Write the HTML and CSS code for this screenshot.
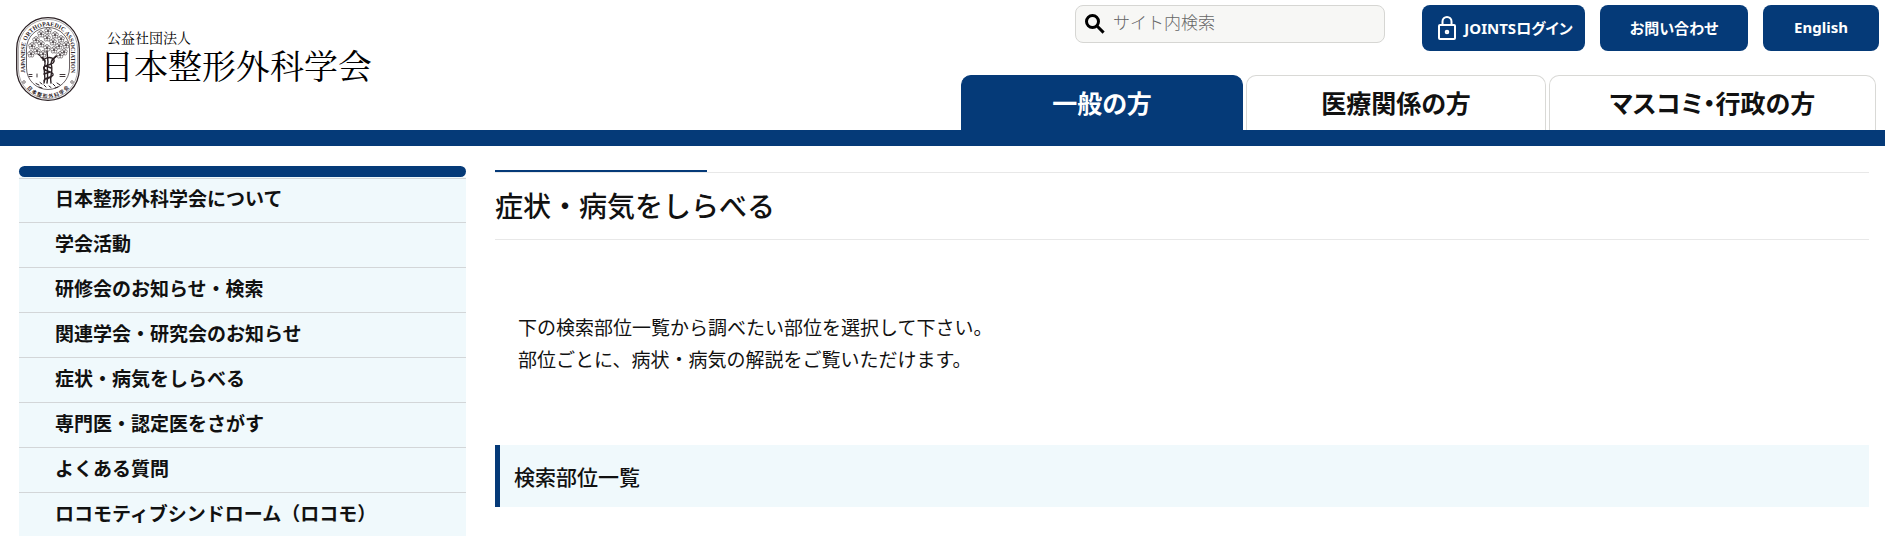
FILE: index.html
```html
<!DOCTYPE html>
<html lang="ja">
<head>
<meta charset="utf-8">
<meta name="viewport" content="width=device-width, initial-scale=1">
<title>症状・病気をしらべる｜日本整形外科学会</title>
<link rel="stylesheet" href="styles.css">
</head>
<body>
<header class="header">
  <a class="logo" href="#">
    <svg class="seal" viewBox="0 0 64 84" aria-hidden="true">
      <defs>
        <path id="arc-top" d="M9 63V32A23 23 0 0 1 55 32V63"/>
        <path id="arc-bottom" d="M5 54A27 27 0 0 0 59 54"/>
        <g id="flower">
          <circle cx="0" cy="-2" r="1.5"/><circle cx="1.9" cy="-.6" r="1.5"/><circle cx="1.2" cy="1.6" r="1.5"/><circle cx="-1.2" cy="1.6" r="1.5"/><circle cx="-1.9" cy="-.6" r="1.5"/>
          <circle r=".5" fill="#2b2024"/>
        </g>
      </defs>
      <g fill="#fff" stroke="#2b2024">
        <rect x=".7" y=".7" width="62.6" height="82.6" rx="31.3" stroke-width="1.3"/>
        <rect x="2.4" y="2.4" width="59.2" height="79.2" rx="29.6" stroke-width=".4"/>
        <rect x="10.5" y="10.5" width="43" height="62" rx="21.5" stroke-width=".7"/>
      </g>
      <g fill="none" stroke="#2b2024" stroke-width="1.4" stroke-linecap="round">
        <path d="M28 66C31 58 26 54 29 47C30 42 26 40 22 37M35 66C33 59 38 54 35 47C35 42 40 40 45 36M31 66C33 58 30 53 32 45L31 34"/>
        <path d="M27 43C34 38 41 42 37 46C33 49 26 48 28 52C30 55 38 54 37 58C36 61 28 60 28 64M25 40L29 44M40 39L36 43M30 49L35 51M28 57L34 55M30 62L35 60"/>
        <path d="M20 66.5L23 68M24 65.500L26 67M28 68L30 70M33 69L35 70.500M37 67L39 69M41 66L44 68M23 70L26 71M39 71L42 70" stroke-width="1"/>
        <path d="M13 57.500H16M13 59.500H16M21 57V60M44 57.500H49M44 59.500H49" stroke-width=".9"/>
      </g>
      <g fill="#fff" stroke="#2b2024" stroke-width=".5">
        <use href="#flower" x="32" y="14"/><use href="#flower" x="25" y="17"/><use href="#flower" x="39" y="18"/>
        <use href="#flower" x="20" y="23"/><use href="#flower" x="31" y="21"/><use href="#flower" x="45" y="22"/>
        <use href="#flower" x="16" y="29"/><use href="#flower" x="25" y="27"/><use href="#flower" x="37" y="25"/>
        <use href="#flower" x="50" y="28"/><use href="#flower" x="43" y="29"/><use href="#flower" x="15" y="37"/>
        <use href="#flower" x="21" y="34"/><use href="#flower" x="31" y="31"/><use href="#flower" x="38" y="33"/>
        <use href="#flower" x="48" y="35"/><use href="#flower" x="27" y="37"/><use href="#flower" x="44" y="38"/>
      </g>
      <g fill="none" stroke="#2b2024" stroke-width=".6">
        <circle cx="8" cy="65" r="1.300"/><circle cx="56" cy="65" r="1.300"/>
      </g>
      <text class="seal-en"><textPath href="#arc-top" startOffset="50%">JAPANESE ORTHOPAEDIC ASSOCIATION</textPath></text>
      <text class="seal-ja"><textPath href="#arc-bottom" startOffset="50%">日 本 整 形 外 科 学 会</textPath></text>
    </svg>
    <span class="logo-text">
      <span class="logo-kind">公益社団法人</span>
      <span class="logo-name">日本整形外科学会</span>
    </span>
  </a>
  <div class="header-side">
    <div class="tools">
      <form class="search" role="search">
        <svg class="search-icon" viewBox="0 0 20 20" aria-hidden="true"><circle cx="7.500" cy="7.500" r="6"/><path d="M11.800 11.800L18.600 18.600"/></svg>
        <input class="search-input" type="search" placeholder="サイト内検索" aria-label="サイト内検索">
      </form>
      <a class="button button-login" href="#">
        <svg class="lock-icon" viewBox="0 0 18 24" aria-hidden="true"><rect x="1" y="9" width="16" height="14" rx="1"/><path d="M4.500 9V5.500a4.500 4.500 0 0 1 9 0V9"/><circle cx="9" cy="16" r="1.300"/></svg>
        JOINTSログイン</a>
      <a class="button button-contact" href="#">お問い合わせ</a>
      <a class="button button-english" href="#">English</a>
    </div>
    <nav class="tabs" aria-label="対象者別">
      <a class="tab tab-active" href="#">一般の方</a>
      <a class="tab" href="#">医療関係の方</a>
      <a class="tab" href="#">マスコミ・行政の方</a>
    </nav>
  </div>
</header>
<div class="page">
  <nav class="sidebar" aria-label="メニュー">
    <ul class="menu">
      <li><a href="#">日本整形外科学会について</a></li>
      <li><a href="#">学会活動</a></li>
      <li><a href="#">研修会のお知らせ・検索</a></li>
      <li><a href="#">関連学会・研究会のお知らせ</a></li>
      <li><a href="#">症状・病気をしらべる</a></li>
      <li><a href="#">専門医・認定医をさがす</a></li>
      <li><a href="#">よくある質問</a></li>
      <li><a href="#">ロコモティブシンドローム（ロコモ）</a></li>
    </ul>
  </nav>
  <main class="main">
    <h1 class="title">症状・病気をしらべる</h1>
    <p class="lead">下の検索部位一覧から調べたい部位を選択して下さい。<br>部位ごとに、病状・病気の解説をご覧いただけます。</p>
    <h2 class="section-title">検索部位一覧</h2>
  </main>
</div>
</body>
</html>
```

FILE: styles.css
```css
:root {
  --navy: #053a78;
  --pale: #f0f9fc;
}

* {
  box-sizing: border-box;
}

body {
  margin: 0;
  background: #fff;
  color: #111;
  font-family: "Noto Sans CJK JP", sans-serif;
  font-size: 19px;
}

a {
  color: inherit;
  text-decoration: none;
}

.header {
  display: flex;
  justify-content: space-between;
  align-items: flex-start;
  border-bottom: 16px solid var(--navy);
}

.logo {
  display: flex;
  gap: 20px;
  padding: 17px 0 0 16px;
  color: #000;
}

.seal {
  width: 64px;
  height: 84px;
}

.seal text {
  fill: #2b2024;
  text-anchor: middle;
}

.seal-en {
  font: bold 6px "Liberation Serif", serif;
}

.seal-ja {
  font: bold 5px "Noto Sans CJK JP", sans-serif;
}

.logo-text {
  display: flex;
  flex-direction: column;
  padding-top: 11px;
  font-family: "Noto Serif CJK JP", "Noto Sans CJK JP", serif;
  font-weight: 400;
}

.logo-kind {
  padding-left: 7px;
  font-size: 14px;
  line-height: 18px;
}

.logo-name {
  font-size: 34px;
  line-height: 38px;
}

.header-side {
  display: flex;
  flex-direction: column;
  align-items: flex-end;
  gap: 24px;
  padding-top: 5px;
}

.tools {
  display: flex;
  align-items: flex-start;
  gap: 15px;
  padding-right: 6px;
}

.search {
  display: flex;
  align-items: center;
  gap: 8px;
  width: 310px;
  height: 38px;
  margin-right: 22px;
  padding: 0 9px;
  border: 1px solid #d6d6d3;
  border-radius: 8px;
  background: #f7f7f5;
}

.search-icon {
  flex: none;
  width: 20px;
  height: 20px;
  fill: none;
  stroke: #000;
  stroke-width: 3;
}

.search-input {
  flex: 1;
  min-width: 0;
  padding: 0 0 6px;
  border: 0;
  background: none;
  font-family: inherit;
  font-size: 17px;
  font-weight: 300;
}

.search-input::placeholder {
  color: #666;
}

.button {
  display: flex;
  justify-content: center;
  align-items: center;
  height: 46px;
  padding-bottom: 2px;
  border-radius: 8px;
  background: var(--navy);
  color: #fff;
  font-family: "Noto Sans", "Noto Sans CJK JP", sans-serif;
  font-size: 15px;
  font-weight: 700;
  font-feature-settings: "palt";
}

.button-login {
  gap: 8px;
  width: 163px;
  padding-left: 4px;
}

.button-contact {
  width: 148px;
}

.button-english {
  width: 116px;
}

.lock-icon {
  width: 18px;
  height: 24px;
  margin-top: 2px;
  fill: none;
  stroke: #fff;
  stroke-width: 2;
}

.tabs {
  display: grid;
  grid-template-columns: 282fr 300fr 327fr;
  gap: 3px;
  width: 924px;
  padding-right: 9px;
}

.tab {
  height: 55px;
  border: 1px solid #d9d9d6;
  border-bottom: 0;
  border-radius: 10px 10px 0 0;
  font-size: 25px;
  font-weight: 700;
  line-height: 52px;
  text-align: center;
  font-feature-settings: "palt";
}

.tab-active {
  border-color: var(--navy);
  background: var(--navy);
  color: #fff;
}

.page {
  display: flex;
  align-items: flex-start;
  gap: 29px;
  padding: 20px 16px 0 19px;
}

.sidebar {
  flex: 0 0 447px;
  background: linear-gradient(#fff 11px, var(--pale) 11px);
}

.sidebar::before {
  content: "";
  display: block;
  height: 11px;
  margin-bottom: 1px;
  border-radius: 6px;
  background: var(--navy);
}

.menu {
  margin: 0;
  padding: 0;
  list-style: none;
}

.menu a {
  display: block;
  padding: 0 36px 4px;
  border-top: 1px solid #d3d6d8;
  font-weight: 700;
  line-height: 40px;
}

.menu li:first-child a {
  padding-bottom: 5px;
  line-height: 38px;
}

.main {
  flex: 1;
  min-width: 0;
  padding-top: 4px;
}

.title {
  margin: 0;
  padding-bottom: 2px;
  border-bottom: 1px solid #e8e8e8;
  font-size: 28px;
  font-weight: 500;
  line-height: 64px;
}

.title::before {
  content: "";
  display: block;
  height: 3px;
  background:
    linear-gradient(var(--navy), var(--navy)) 0 0 / 212px 2px no-repeat,
    linear-gradient(#e8e8e8, #e8e8e8) 0 2px / 100% 1px no-repeat;
}

.lead {
  margin: 71px 0 70px;
  padding: 0 23px;
  line-height: 32px;
}

.section-title {
  margin: 0;
  padding: 0 14px;
  border-left: 5px solid var(--navy);
  background: var(--pale);
  font-size: 21px;
  font-weight: 500;
  line-height: 62px;
}
```
